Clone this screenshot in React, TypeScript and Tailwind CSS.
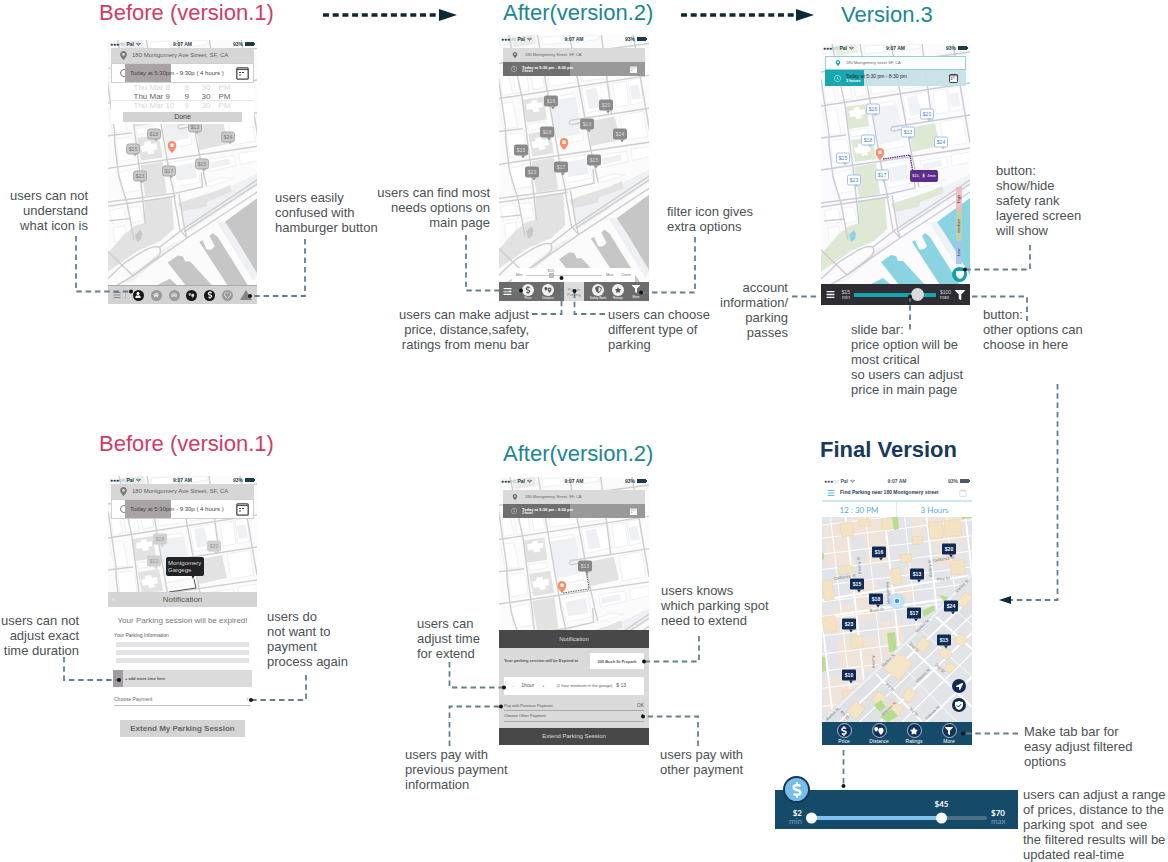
import React from "react";
import {
  FaBars, FaDollarSign, FaFilter, FaLocationArrow, FaMapMarkerAlt, FaRegCalendar,
  FaRegClock, FaRegHeart, FaShieldAlt, FaStar, FaUser, FaWifi, FaHome, FaCar,
} from "react-icons/fa";

type Palette = { land: string; block: string; park: string; water: string; road: string };

const gray: Palette = { land: "#fbfbfc", block: "#eef0f4", park: "#e2e2e2", water: "#c6c6c6", road: "#cecece" };
const color: Palette = { land: "#fbfbfd", block: "#f0f2f7", park: "#dfe8d4", water: "#8ad3e1", road: "#cbcbd3" };

const outlines = [
  "M2 3L8 2L10 9L2 10Z", "M14 3L36 1L38 8L15 11Z", "M43 2L66 1L69 7L44 10Z", "M73 2L98 0L100 4L74 8Z",
  "M2 37L10 35L15 57L5 59Z", "M14 31L27 28L31 54L18 57Z", "M31 29L41 27L46 51L35 53Z", "M46 26L74 22L78 46L51 50Z",
  "M78 21L102 17L106 42L82 45Z", "M106 18L119 15L122 38L110 40Z", "M121 15L134 13L138 35L125 37Z",
  "M82 52L108 47L112 70L86 76Z", "M112 47L125 45L128 68L115 70Z", "M127 44L139 42L142 65L130 68Z",
  "M2 67L15 65L20 90L6 91Z", "M9 97L22 95Q27 96 27 100L29 116L12 119Z", "M29 87L46 84L48 90L30 93Z",
  "M50 61L73 57L77 67L52 71Z", "M52 75L78 71L84 102L58 107Z", "M119 78L142 74L146 99L123 103Z",
  "M12 130L30 125L34 147L15 150Z", "M61 120L88 116L92 139L67 144Z", "M99 117L125 113L127 123L101 129Z",
  "M130 111L149 108L149 118L131 122Z", "M3 167L17 164L20 178L6 180Z", "M21 164L33 163L36 177L24 179Z",
  "M7 184L18 182L19 188L12 197L8 198Z", "M97 140L112 135L125 136L98 144Z",
];
const fills = [
  "M50 64L76 60L81 96L58 101Z", "M86 53L96 51L101 70L89 72Z", "M128 50L137 48L140 62L131 63Z", "M66 124L86 120L89 135L69 138Z",
  "M101 120L120 116L121 122L102 126Z", "M84 26L98 23L101 37L86 39Z", "M127 19L132 18L135 32L129 33Z",
  "M72 168L149 130L149 142L80 188Z", "M56 205L74 195L26 236L12 240Z", "M108 178L116 178L149 228L144 236Z",
];
const roads = [
  "M0 28L149 8", "M0 62L149 39", "M0 94L25 91", "M71 83L149 71", "M71 83Q68 87 73 87L82 85", "M0 126L149 104",
  "M0 35L8 90L8 101L12 133L20 159L27 196", "M11 0L24 61L33 132L38 180", "M39 0L46 40L62 132L67 154",
  "M70 0L91 112L98 143", "M101 0L111 77", "M132 0L149 99", "M0 159L68 150L94 144L93 130", "M0 163L68 153",
  "M3 177L23 175", "M66 152L72 186L79 194", "M71 151L76 182L79 194", "M0 206L26 231",
  "M149 136L74 186L52 203Q46 201 34 208L18 218L0 235", "M149 140L76 188", "M149 148L79 194L26 231L9 241",
  "M52 203Q55 210 47 215L26 231",
];

function CityMap({ palette, className }: { palette: Palette; className: string }) {
  return (
    <svg aria-hidden="true" viewBox="0 0 149 241" preserveAspectRatio="xMidYMin slice" className={className}>
      <rect width="149" height="262" fill={palette.land} />
      <g fill="#ffffff" stroke={palette.block} strokeWidth="1">
        {outlines.map((d) => <path key={d} d={d} />)}
      </g>
      <g fill={palette.block}>{fills.map((d) => <path key={d} d={d} />)}</g>
      <g fill={palette.park}>
        <path d="M24 63L45 60L48 82L28 85Z M30 96L51 93L55 115L34 118Z M33 123L55 119L59 150L38 153Z M88 84L114 79L119 102L91 108Z" />
        <path d="M37 157L64 154L66 185L53 197L30 207L0 228L0 210L18 190L28 182L38 179Z" />
        <path d="M70 160L110 147L121 142L123 149L99 158L98 163L74 168Z" />
        <path d="M14 2L35 0L37 8L16 12Z" opacity=".7" />
      </g>
      <path fill="#ffffff" d="M28 67l5-1v-2l5-1 1 3 5-1v5l-4 1 1 3-6 1-1-3-5 1z M33 104l4-1v-3l6-1 1 3 5-1 1 6-4 1 1 3-6 1-1-3-5 1z" />
      <path fill={palette.water} d="M149 154L116 178L126 193L149 231Z M91 198L94 196L98 205Q103 207 106 202L101 192L104 189L109 193L139 241L119 241L106 221Z M60 218L70 211L75 212L77 217L82 217L104 241L78 241Z M48 241L62 234L70 241Z" />
      <path fill={palette.water} d="M28 191L33 186L35 190L34 195L30 198Z" />
      <g fill="none" stroke={palette.road} strokeWidth="1.4">
        {roads.map((d) => <path key={d} d={d} />)}
      </g>
    </svg>
  );
}

type PinData = { x: number; y: number; price: string };
function Pins({ pins, look }: { pins: PinData[]; look: string }) {
  return (
    <>
      {pins.map((p) => (
        <button
          key={`${p.x}-${p.y}`}
          style={{ left: p.x, top: p.y }}
          className={`absolute flex h-[11px] w-[14px] -translate-x-1/2 -translate-y-1/2 items-center justify-center text-[5px] leading-none after:absolute after:-bottom-[3px] after:left-1/2 after:border-x-2 after:border-t-3 after:border-x-transparent after:border-t-inherit ${look}`}
        >
          {p.price}
        </button>
      ))}
    </>
  );
}

function Spot({ x, y }: { x: number; y: number }) {
  return (
    <svg aria-hidden="true" viewBox="0 0 9 12" style={{ left: x, top: y }} className="absolute h-3 w-[9px] -translate-x-1/2 -translate-y-1/2">
      <path d="M4.5 0A4.4 4.4 0 0 0 0 4.5C0 7.5 4.5 12 4.5 12S9 7.5 9 4.5A4.4 4.4 0 0 0 4.5 0Z" fill="#f98e6d" />
      <rect x="3" y="2.6" width="3" height="3.4" fill="#fff" />
    </svg>
  );
}

function StatusBar({ tone = "text-[#1d3c49]" }: { tone?: string }) {
  return (
    <div className={`relative flex h-2 items-center justify-between px-0.5 text-[5px] leading-none font-bold ${tone}`}>
      <span className="flex flex-1 items-center gap-0.5">●●●○○ Pal <FaWifi /></span>
      <span>9:07 AM</span>
      <span className="flex flex-1 items-center justify-end gap-0.5">
        93%
        <svg aria-hidden="true" viewBox="0 0 10 4" className="h-1 w-2.5"><path d="M0 0h9v1h1v2H9v1H0z" fill="currentColor" /></svg>
      </span>
    </div>
  );
}

function CalendarGlyph({ className }: { className: string }) {
  return (
    <svg aria-hidden="true" viewBox="0 0 13 13" className={className}>
      <rect x=".8" y=".8" width="11.4" height="11.4" rx="1" fill="#fff" stroke="currentColor" strokeWidth="1.3" />
      <path d="M1 2.6H12M3 5.5h2M6 5.5h2M3 8h2" stroke="currentColor" strokeWidth="1" />
    </svg>
  );
}

function HeaderOne() {
  return (
    <>
      <StatusBar />
      <div className="relative mx-[3px] flex h-[15px] items-center gap-1 bg-[#d6d6d6] pl-2 text-[6px] text-[#5d5d5d]">
        <FaMapMarkerAlt className="size-[9px] text-[#7a7a7a]" />
        <span>180 Montgomery Ave Street, SF, CA</span>
      </div>
      <div className="relative mx-[3px] flex h-5 items-center border border-[#cfcfcf] bg-white pr-1 pl-2">
        <span className="size-2 rounded-full border border-[#777]" />
        <span className="-ml-[3px] h-full w-[46px] bg-[#a9a3a6]" />
        <span className="absolute left-[18px] text-[6px] whitespace-nowrap text-[#444]">Today at 5:30pm - 9:30p ( 4 hours )</span>
        <button aria-label="Calendar" className="ml-auto"><CalendarGlyph className="size-[13px] text-[#444]" /></button>
      </div>
    </>
  );
}

function HeaderTwo() {
  return (
    <>
      <StatusBar />
      <div className="relative mx-1 mt-[5px] flex h-[14px] items-center gap-[7px] bg-[#dadada] pl-[9px] text-[4px] text-[#666]">
        <FaMapMarkerAlt className="size-[6px] text-[#666]" />
        <span>180 Montgomery Street, SF, CA</span>
      </div>
      <div className="relative mx-1 flex h-[14px] items-center bg-[#999999] pr-[7px]">
        <span className="absolute inset-y-0 left-0 w-[67px] bg-[#6f6f6f]" />
        <FaRegClock className="relative ml-2 size-[6px] text-[#b8b8b8]" />
        <span className="relative ml-[5px] flex flex-col text-[4px] leading-[5px] font-bold text-white">
          Today at 5:30 pm - 8:30 pm
          <small className="text-[3px] leading-[3px]">3 hours</small>
        </span>
        <button aria-label="Calendar" className="relative ml-auto"><CalendarGlyph className="size-[9px] text-[#8c8c8c]" /></button>
      </div>
    </>
  );
}

type Mark = { d: string; x?: number; y?: number };
function Connectors({ box, size, marks, children }: { box: string; size: string; marks: Mark[]; children?: React.ReactNode }) {
  return (
    <svg aria-hidden="true" viewBox={box} className={`pointer-events-none absolute top-0 left-0 z-10 overflow-visible ${size}`}>
      {marks.map((m) => (
        <g key={m.d}>
          <path d={m.d} fill="none" stroke="#64808a" strokeWidth="1.8" strokeDasharray="5.5 3.8" />
          {m.x !== undefined && <circle cx={m.x} cy={m.y} r="2" fill="#11181c" />}
        </g>
      ))}
      {children}
    </svg>
  );
}

function Note({ className, children }: { className: string; children: string }) {
  return <p className={`absolute text-[13px] leading-[15px] whitespace-pre text-[#4b5154] ${className}`}>{children}</p>;
}

function Heading({ className, children }: { className: string; children: string }) {
  return <h2 className={`text-[22px] leading-6 ${className}`}>{children}</h2>;
}

function DistanceGlyph({ className }: { className: string }) {
  return (
    <svg aria-hidden="true" viewBox="0 0 12 10" className={className}>
      <path d="M2.5 0A2.4 2.4 0 0 0 0 2.4C0 4 2.5 6 2.5 6S5 4 5 2.4A2.4 2.4 0 0 0 2.5 0Z M8.5 1A3.3 3.3 0 0 0 5.2 4.3C5.2 6.6 8.5 10 8.5 10S11.8 6.6 11.8 4.3A3.3 3.3 0 0 0 8.5 1Z" fill="currentColor" />
      <circle cx="8.5" cy="4.3" r="1.3" fill="#fff" />
    </svg>
  );
}

function PhoneOne() {
  const icons = [
    { name: "Account", icon: <FaUser />, tone: "bg-[#161616] text-white" },
    { name: "Garage", icon: <FaHome />, tone: "bg-[#9a9a9a] text-[#e8e8e8]" },
    { name: "Car", icon: <FaCar />, tone: "bg-[#9a9a9a] text-[#e0e0e0]" },
    { name: "Distance", icon: <DistanceGlyph className="h-[5px] w-[7px]" />, tone: "bg-[#161616] text-[#bbb]" },
    { name: "Price", icon: <FaDollarSign className="size-[8px]" />, tone: "bg-[#161616] text-white" },
    { name: "Favorites", icon: <FaRegHeart className="size-[7px]" />, tone: "bg-[#9a9a9a] text-[#e8e8e8]" },
  ];
  return (
    <div className="relative mt-[15px] ml-[108px] flex h-[264px] w-[149px] flex-col overflow-hidden">
      <CityMap palette={gray} className="absolute inset-x-0 top-0 h-[246px] w-full" />
      <Pins
        look="rounded-[3px] border border-[#a9a9a9] bg-[#c9c9c9] text-[#777]"
        pins={[
          { x: 46, y: 94, price: "$18" }, { x: 87, y: 87, price: "$13" }, { x: 120, y: 97, price: "$24" }, { x: 25, y: 109, price: "$15" },
          { x: 94, y: 124, price: "$15" }, { x: 61, y: 131, price: "$17" }, { x: 32, y: 136, price: "$23" },
        ]}
      />
      <Spot x={64} y={107} />
      <HeaderOne />
      <div className="relative mx-[3px] bg-white pb-0.5 text-[8px] leading-[9px] text-[#666]">
        {["Thu Mar 8", "Thu Mar 9", "Thu Mar 10"].map((day, i) => (
          <div key={day} className={`grid h-[9px] grid-cols-[47px_13px_13px_13px] justify-center gap-x-1 overflow-hidden ${i === 1 ? "border-b border-[#e4e4e4]" : "text-[#d9d9d9]"}`}>
            <span className="whitespace-nowrap">{day}</span><span>9</span><span>30</span><span>PM</span>
          </div>
        ))}
        <button className="mx-auto mt-0.5 block h-[10px] w-[119px] bg-[#d2d2d2] text-[7px] leading-[10px] text-[#444]">Done</button>
      </div>
      <nav className="relative mt-auto flex h-[19px] items-center justify-between border-t border-[#aaa] bg-[#d2d2d2] px-[5px]">
        <button aria-label="Menu" className="border-r border-[#bbb] pr-1"><FaBars className="size-2 text-[#85858f]" /></button>
        {icons.map((i) => (
          <button key={i.name} aria-label={i.name} className={`flex size-[11px] items-center justify-center rounded-full text-[6px] ${i.tone}`}>{i.icon}</button>
        ))}
        <svg aria-hidden="true" viewBox="0 0 12 10" className="h-2.5 w-3"><path d="M6 0L12 10H0Z" fill="#858585" /></svg>
      </nav>
    </div>
  );
}

function RoundTab({ label, icon }: { label: string; icon: React.ReactNode }) {
  return (
    <button className="flex w-5 flex-col items-center text-[3px] leading-[4px] text-white">
      <span className="flex size-3 items-center justify-center rounded-full bg-[#f1f1f1] text-[#555]">{icon}</span>
      <span className="whitespace-nowrap">{label}</span>
    </button>
  );
}

function PhoneTwo() {
  return (
    <div className="relative mt-[10px] ml-[119px] flex h-[266px] w-[150px] flex-col overflow-hidden">
      <CityMap palette={gray} className="absolute inset-x-0 top-0 h-[248px] w-full" />
      <Pins
        look="rounded-[2px] border-[#8b8b8b] bg-[#8b8b8b] text-[#ddd]"
        pins={[
          { x: 52, y: 66, price: "$16" }, { x: 107, y: 70, price: "$20" }, { x: 88, y: 89, price: "$13" }, { x: 48, y: 97, price: "$18" },
          { x: 121, y: 99, price: "$24" }, { x: 22, y: 115, price: "$15" }, { x: 95, y: 125, price: "$15" }, { x: 62, y: 132, price: "$17" }, { x: 33, y: 137, price: "$23" },
        ]}
      />
      <Spot x={65} y={109} />
      <HeaderTwo />
      <label className="relative mt-auto mr-[14px] ml-[13px] flex h-[14px] items-center gap-1 bg-white px-1 text-[4px] text-[#777]">
        Min
        <span className="relative flex flex-1 items-center">
          <span className="absolute -top-[6px] left-[21px] leading-none">$15</span>
          <input type="range" defaultValue={32} aria-label="Price" className="h-px w-full appearance-none bg-[#c9c9c9] [&::-webkit-slider-thumb]:size-[5px] [&::-webkit-slider-thumb]:appearance-none [&::-webkit-slider-thumb]:bg-[#bbbbbb]" />
        </span>
        Max <span className="ml-1">Done</span>
      </label>
      <nav className="relative flex h-[19px] items-center bg-[#6c6c6c]">
        <button aria-label="Menu" className="ml-1"><FaBars className="size-[9px] text-white" /></button>
        <span className="ml-[6px] flex"><RoundTab label="Price" icon={<FaDollarSign className="size-2" />} /><RoundTab label="Distance" icon={<DistanceGlyph className="h-1.5 w-2" />} /></span>
        <button className="ml-[6px] flex h-full w-5 flex-col items-center justify-center bg-[#dcdcdc] text-[4px] leading-[5px] text-[#888]">Private<br />Parking</button>
        <span className="ml-1 flex"><RoundTab label="Safety Rank" icon={<FaShieldAlt className="size-[7px]" />} /><RoundTab label="Ratings" icon={<FaStar className="size-[6px]" />} /></span>
        <button className="flex w-4 flex-col items-center gap-0.5 text-[3px] leading-[4px] text-white"><FaFilter className="size-2" />More</button>
      </nav>
    </div>
  );
}

function PhoneThree() {
  return (
    <div className="relative mt-[17px] ml-[51px] flex h-[261px] w-[149px] flex-col overflow-hidden">
      <CityMap palette={color} className="absolute inset-x-0 top-0 h-[241px] w-full" />
      <svg aria-hidden="true" viewBox="0 0 149 241" className="absolute top-0 left-0 h-[241px] w-[149px]">
        <path d="M62 115L89 111L92 129" fill="none" stroke="#5d2b8c" strokeWidth="1.4" strokeDasharray="1.5 .8" />
      </svg>
      <Pins
        look="rounded-[2px] border border-[#a5c4ea] bg-white text-[#4d7fcb]"
        pins={[
          { x: 52, y: 65, price: "$16" }, { x: 106, y: 70, price: "$20" }, { x: 87, y: 88, price: "$13" }, { x: 47, y: 96, price: "$18" },
          { x: 120, y: 98, price: "$24" }, { x: 22, y: 114, price: "$15" }, { x: 61, y: 131, price: "$17" }, { x: 33, y: 136, price: "$23" },
        ]}
      />
      <button className="absolute top-[126px] left-[89px] h-3 w-7 rounded-[2px] bg-[#5d2b8c] text-[4px] leading-3 whitespace-nowrap text-white">$15, 🚶︎ 4min</button>
      <Spot x={59} y={110} />
      <StatusBar />
      <div className="relative mx-1 mt-1 flex h-[14px] items-center gap-[5px] border border-[#8cd3d9] bg-white pl-[9px] text-[4px] text-[#666]">
        <FaMapMarkerAlt className="size-[6px] text-[#1aa3ab]" />
        <span>180 Montgomery street SF, CA</span>
      </div>
      <div className="relative mx-1 flex h-4 items-center bg-[#c3e0e6]/90 pr-2">
        <span className="absolute inset-y-0 left-0 w-[39px] bg-[#1aa7af]" />
        <FaRegClock className="relative ml-[9px] size-[7px] text-[#9be0e4]" />
        <span className="relative ml-[5px] flex flex-col text-[5px] leading-[5px] text-[#223]">
          Today at 5:30 pm - 8:30 pm
          <small className="text-[4px] leading-[4px] font-bold text-white">3 hours</small>
        </span>
        <button aria-label="Calendar" className="relative ml-auto"><CalendarGlyph className="size-[9px] text-[#222]" /></button>
      </div>
      <div className="absolute top-[143px] right-[8px] flex w-[6px] flex-col text-[4px] leading-[6px] text-[#334]">
        <span className="flex h-6 rotate-180 items-center justify-center bg-[#eeb9bb]/90 [writing-mode:vertical-rl]">High</span>
        <span className="flex h-[30px] rotate-180 items-center justify-center bg-[#c4cfa5]/90 [writing-mode:vertical-rl]">medium</span>
        <span className="flex h-[23px] rotate-180 items-center justify-center bg-[#a3c4e8]/90 [writing-mode:vertical-rl]">Low</span>
      </div>
      <button aria-label="Safety rank" className="absolute top-[223px] right-[3px] flex size-[15px] items-center justify-center rounded-full bg-[#15a0a8]">
        <svg aria-hidden="true" viewBox="0 0 8 8" className="size-2"><path d="M0 0H8V4Q7 7 4 8Q1 7 0 4Z" fill="#fff" /></svg>
      </button>
      <nav className="relative mt-auto flex h-[21px] items-center gap-1 bg-[#2d2d33] px-[5px] text-[5px] leading-[5px] text-[#d5d5d5]">
        <button aria-label="Account"><FaBars className="size-[9px] text-white" /></button>
        <span className="w-[11px] text-right">$15<br />min</span>
        <input type="range" defaultValue={83} aria-label="Price" className="h-1 w-20 min-w-0 flex-1 appearance-none bg-[#14a5ae] [&::-webkit-slider-thumb]:size-[13px] [&::-webkit-slider-thumb]:appearance-none [&::-webkit-slider-thumb]:rounded-full [&::-webkit-slider-thumb]:bg-[#d9d9d9]" />
        <span>$100<br />max</span>
        <button aria-label="More options"><FaFilter className="size-[10px] text-white" /></button>
      </nav>
    </div>
  );
}

function ExpiryOne() {
  return (
    <div className="relative mt-5 ml-[108px] flex h-[270px] w-[149px] flex-col">
      <div className="relative h-[116px] overflow-hidden">
        <CityMap palette={gray} className="absolute top-0 left-0 h-[241px] w-[149px]" />
        <Pins look="rounded-[2px] border-[#d0d0d0] bg-[#d0d0d0] text-[#999]" pins={[{ x: 52, y: 63, price: "$18" }, { x: 106, y: 70, price: "$20" }, { x: 46, y: 85, price: "$12" }]} />
        <svg aria-hidden="true" viewBox="0 0 149 116" className="absolute top-0 left-0 h-[116px] w-[149px]">
          <path d="M82 96H88L85 103Z" fill="#222226" /><path d="M86 103L88 112L61 116" fill="none" stroke="#555" strokeWidth="1" />
        </svg>
        <button className="absolute top-[81px] left-[58px] h-[19px] w-[38px] rounded-[2px] bg-[#222226] pl-0.5 text-left text-[6px] leading-[7px] text-[#ddd]">Montgomery Gargege</button>
        <HeaderOne />
      </div>
      <div className="relative flex h-[15px] items-center justify-center bg-[#d4d4d4] text-[8px] text-[#555]">
        <button aria-label="Back" className="absolute left-1 text-white">‹</button>Notification
      </div>
      <p className="mt-2 text-center text-[8px] leading-3 whitespace-nowrap text-[#777]">Your Parking session will be expired!</p>
      <p className="mt-1 ml-[6px] text-[5px] leading-2 text-[#555]">Your Parking Information</p>
      <div className="mt-[3px] flex flex-col gap-[3px] px-2">
        <span className="h-[5px] bg-[#e3e3e6]" /><span className="h-[5px] bg-[#e3e3e6]" /><span className="h-[5px] bg-[#e3e3e6]" />
      </div>
      <button className="mx-[5px] mt-[7px] flex h-[17px] items-center gap-0.5 bg-[#dbdbdb] text-[4px] font-bold text-[#555]">
        <span className="h-full w-[10px] bg-[#a19b9f]" />+ add more time here
      </button>
      <button className="mx-[6px] mt-2 flex h-[11px] items-center justify-between border-b border-[#c4c4c4] pr-0.5 text-[5px] text-[#666]">Choose Payment<span className="text-[8px] text-[#aaa]">›</span></button>
      <button className="mx-auto mt-[14px] h-[17px] w-[125px] bg-[#d4d4d4] text-[8px] font-bold whitespace-nowrap text-[#666]">Extend My Parking Session</button>
    </div>
  );
}

function ExpiryTwo() {
  return (
    <div className="relative mt-[11px] ml-[119px] flex w-[150px] flex-col">
      <div className="relative h-[153px] overflow-hidden">
        <CityMap palette={gray} className="absolute top-0 left-0 h-[243px] w-[150px]" />
        <svg aria-hidden="true" viewBox="0 0 150 153" className="absolute top-0 left-0 h-[153px] w-[150px]">
          <path d="M64 116L90 112L87 92" fill="none" stroke="#555" strokeWidth="1" strokeDasharray="1.5 1" />
        </svg>
        <Pins look="rounded-[2px] border-[#868686] bg-[#868686] text-[#ddd]" pins={[{ x: 86, y: 89, price: "$13" }]} />
        <Spot x={63} y={110} />
        <HeaderTwo />
      </div>
      <div className="flex h-[18px] items-center justify-center bg-[#484848] text-[6px] text-[#ddd]">Notification</div>
      <div className="flex h-20 flex-col bg-[#dadada] px-[5px] text-[4px] text-[#555]">
        <label className="mt-[5px] flex h-4 items-center justify-between font-bold whitespace-nowrap">
          Your parking session will be Expired at
          <input readOnly defaultValue="205 Bush St Propark" className="h-4 w-[54px] bg-white px-1 text-center font-bold" />
        </label>
        <div className="mt-2 flex h-[18px] items-center bg-white px-2 whitespace-nowrap">
          <button aria-label="Less time">-</button><span className="ml-2 text-[5px]">1hour</span><button aria-label="More time" className="ml-2">+</button>
          <span className="ml-3">(1 hour minimum in the garage)</span><span className="ml-1 text-[5px]">$ 13</span>
        </div>
        <button className="mt-[7px] flex h-[9px] items-center justify-between border-b border-[#aaa]"><span>Pay with Previous Payment</span><span className="text-[5px]">OK</span></button>
        <button className="flex h-[11px] items-center justify-between border-b border-[#aaa]"><span>Choose Other Payment</span><span className="text-[8px] leading-none">›</span></button>
      </div>
      <button className="h-[17px] bg-[#484848] text-[6px] text-[#ddd]">Extend Parking Session</button>
    </div>
  );
}

const northAvenues = [-12, 8, 23, 43, 62, 82, 104, 124, 143];
const northStreets = [-6, 8, 21, 37, 52, 68, 84, 101, 118, 136, 153, 170, 188, 206];
const beige = [
  [0, 8, 26, 42], [28, 0, 38, 24], [40, 14, 22, 40], [0, 90, 20, 30], [22, 70, 24, 38], [0, 125, 42, 34], [45, 112, 22, 60],
  [105, 6, 34, 36], [108, 46, 26, 18], [66, 80, 16, 12], [0, 164, 44, 36], [88, 10, 12, 22], [-20, 160, 40, 50], [76, 60, 20, 14],
];
const buildings = [
  [18, 6, 12, 14], [36, 3, 12, 7], [59, 2, 12, 11], [106, 6, 14, 16], [122, 4, 16, 16], [128, 44, 14, 14], [78, 38, 11, 8],
  [68, 52, 10, 16], [16, 50, 14, 8], [0, 64, 10, 20], [0, 100, 13, 16], [28, 120, 12, 12], [20, 174, 14, 12], [38, 168, 14, 12], [90, 20, 10, 8],
];
const southBuildings = [[66, 138, 20, 22], [96, 122, 10, 12], [118, 132, 11, 9], [134, 118, 10, 10], [82, 172, 10, 12], [138, 76, 9, 14], [52, 176, 10, 12], [124, 146, 8, 9], [66, 186, 14, 10], [28, 186, 12, 14]];

function DowntownMap() {
  const name = "font-[Liberation_Sans] text-[4px]";
  return (
    <svg viewBox="0 0 150 205" className="absolute inset-0 h-full w-full">
      <defs>
        <clipPath id="north"><path d="M0 0H150V58L108 103L0 205Z" /></clipPath>
        <clipPath id="south"><path d="M150 58V205H0L108 103Z" /></clipPath>
      </defs>
      <rect width="150" height="205" fill="#e3e4e7" />
      <g clipPath="url(#north)">
        <g transform="rotate(-7)">
          {beige.map(([x, y, w, h]) => <rect key={`${x}-${y}`} x={x} y={y} width={w} height={h} fill="#f0e4da" />)}
          {northStreets.map((y) => <path key={y} d={`M-40 ${y}H180`} stroke="#fff" strokeWidth="1" />)}
        </g>
        {northAvenues.map((x, i) => <path key={x} d={`M${x} -5L${x + 24} 210`} stroke="#fff" strokeWidth={i % 2 ? 0.9 : 1.8} />)}
        <path d="M0 83L150 58M0 100L150 78" stroke="#fff" strokeWidth="2" />
        <g fill="#f3e3c3" stroke="#e6d2ab" strokeWidth=".5">
          {buildings.map(([x, y, w, h]) => <rect key={`${x}-${y}`} x={x} y={y} width={w} height={h} rx="1" transform={`rotate(-7 ${x} ${y})`} />)}
        </g>
        <path d="M70 0L76 0L77 12L72 13Z M139 0L150 0L150 1L140 2Z M0 37L2 36L2 42L0 43Z M65 116L73 115L75 134L67 135Z M0 140L3 140L4 154L0 155Z M100 94L112 88L113 93L102 100Z M117 78L127 80L123 86Z" fill="#b7dc92" />
      </g>
      <g clipPath="url(#south)">
        <path d="M88 128L128 92L150 74V100L96 150L56 205H0Z" fill="#dfe1e5" />
        <g stroke="#fff" strokeWidth="1.1" fill="none">
          <path d="M150 98L30 212M150 136L80 205" />
          <path d="M70 139L135 205M98 112L150 160M126 86L150 108" strokeWidth=".8" />
          <path d="M150 80L10 212M150 116L58 205M150 160L104 205M52 155L100 205M84 126L150 190M112 98L150 132" strokeWidth="1.8" />
        </g>
        <g fill="#f4e5c6" stroke="#e6d2ab" strokeWidth=".5">
          {southBuildings.map(([x, y, w, h]) => <rect key={`${x}-${y}`} x={x} y={y} width={w} height={h} rx="1" transform={`rotate(38 ${x + w / 2} ${y + h / 2})`} />)}
        </g>
        <path d="M52 188L59 183L64 190L58 195Z M58 200L70 192L76 199L66 205Z" fill="#b5dd8e" />
      </g>
      <path d="M0 205L108 103L150 58" stroke="#cdd0d6" strokeWidth="4.4" fill="none" />
      <path d="M0 205L108 103L150 58" stroke="#eceef1" strokeWidth="3.6" fill="none" />
      <circle cx="75" cy="84" r="8" fill="#b9dcf3" opacity=".8" /><circle cx="75" cy="84" r="3" fill="#fff" /><circle cx="75" cy="84" r="2.2" fill="#3793dd" />
      <g fill="#777">
        <text className={name} transform="translate(12 63) rotate(-9)">California St</text>
        <text className={name} transform="translate(111 45) rotate(-9)">California St</text>
        <text className={name} transform="translate(115 64) rotate(-6)">Pine St</text>
        <text className={name} transform="translate(48 95) rotate(-7)">Bush St</text>
        <text className={name} transform="translate(39 57) rotate(-94)">Kearny St</text>
        <text className={name} transform="translate(68 87) rotate(-94)">Montgomery</text>
        <text className={name} transform="translate(110 60) rotate(-94)">Battery St</text>
        <text className={name} transform="translate(135 76) rotate(-46)">Market St</text>
        <text className={name} transform="translate(61 150) rotate(-44)">Market St</text>
        <text className={name} transform="translate(95 116) rotate(-44)">Market St</text>
        <text className={name} transform="translate(95 166) rotate(-44)">Mission St</text>
        <text className={name} transform="translate(61 199) rotate(-44)">Mission St</text>
        <text className={name} transform="translate(105 203) rotate(-44)">Folsom St</text>
        <text className={name} transform="translate(5 204) rotate(-44)">Market St</text>
        <text className={name} transform="translate(53 151) rotate(-94)">Kearny</text>
        <text className={name} transform="translate(63 167) rotate(46)">3rd St</text>
        <text className={name} transform="translate(87 127) rotate(46)">2nd St</text>
        <text className={name} transform="translate(113 148) rotate(46)">2nd St</text>
        <text className={name} transform="translate(87 192) rotate(46)">3rd St</text>
        <text className={name} transform="translate(18 195) rotate(46)">4th St</text>
      </g>
    </svg>
  );
}

function FinalPhone() {
  const tabs = [
    { label: "Price", icon: <FaDollarSign className="size-[10px]" /> },
    { label: "Distance", icon: <DistanceGlyph className="h-[8px] w-[10px]" /> },
    { label: "Ratings", icon: <FaStar className="size-2" /> },
    { label: "More", icon: <FaFilter className="size-2" /> },
  ];
  return (
    <div className="mt-[15px] ml-[52px] flex w-[150px] flex-col">
      <StatusBar tone="text-[#4a596d]" />
      <div className="flex h-[17px] items-center border-b-2 border-[#cfe6f5] px-[5px]">
        <button aria-label="Menu"><FaBars className="size-2 text-[#6fb7e3]" /></button>
        <span className="ml-[5px] text-[5px] font-bold whitespace-nowrap text-[#1c3c60]">Find Parking near 180 Montgomery street</span>
        <button aria-label="Calendar" className="ml-auto"><FaRegCalendar className="size-2 text-[#d5dbe0]" /></button>
      </div>
      <div className="grid h-[15px] grid-cols-2 divide-x divide-[#dcebf5] font-[Lato] text-[8px] text-[#55ade0]">
        <button>12 : 30 PM</button><button>3 Hours</button>
      </div>
      <div className="relative h-[205px] overflow-hidden">
        <DowntownMap />
        <Pins
          look="rounded-[1px] border-[#0f2b55] bg-[#0f2b55] font-bold text-white"
          pins={[
            { x: 57, y: 35, price: "$16" }, { x: 127, y: 32, price: "$20" }, { x: 95, y: 57, price: "$13" }, { x: 35, y: 67, price: "$15" }, { x: 54, y: 82, price: "$18" },
            { x: 92, y: 96, price: "$17" }, { x: 129, y: 89, price: "$24" }, { x: 27, y: 107, price: "$23" }, { x: 122, y: 123, price: "$15" }, { x: 27, y: 158, price: "$10" },
          ]}
        />
        <div className="absolute right-[6px] bottom-[10px] flex flex-col gap-[5px]">
          <button aria-label="My location" className="flex size-[14px] items-center justify-center rounded-full bg-[#0f2b55] text-white"><FaLocationArrow className="size-[7px]" /></button>
          <button aria-label="Safety" className="flex size-[14px] items-center justify-center rounded-full bg-[#0f2b55] text-white">
            <svg aria-hidden="true" viewBox="0 0 8 9" className="h-[9px] w-2"><path d="M4 0Q6 1 8 1V5Q7 8 4 9Q1 8 0 5V1Q2 1 4 0Z" fill="#fff" /><path d="M2 4.5L3.5 6L6 3.2" stroke="#0f2b55" strokeWidth="1" fill="none" /></svg>
          </button>
        </div>
      </div>
      <nav className="flex h-[23px] items-center gap-[13px] bg-[#154a69] pl-[11px] text-white">
        {tabs.map((t) => (
          <button key={t.label} className="flex w-[22px] flex-col items-center text-[5px] leading-[6px]">
            <span className="flex size-[15px] items-center justify-center rounded-full border border-[#a9bfd0] bg-[#123059]">{t.icon}</span>
            {t.label}
          </button>
        ))}
      </nav>
    </div>
  );
}

const thumb =
  "pointer-events-none absolute inset-x-0 top-1/2 h-[11px] w-full -translate-y-1/2 appearance-none bg-transparent [&::-webkit-slider-thumb]:pointer-events-auto [&::-webkit-slider-thumb]:size-[11px] [&::-webkit-slider-thumb]:appearance-none [&::-webkit-slider-thumb]:rounded-full [&::-webkit-slider-thumb]:bg-white";

function PriceRange() {
  return (
    <div className="relative mt-[45px] ml-[5px] flex h-[39px] w-[243px] items-end bg-[#154a69] px-2.5 pb-1 font-[Lato] font-bold text-white">
      <span className="absolute -top-[14px] left-2 flex size-[27px] items-center justify-center rounded-full border-2 border-[#15375e] bg-[#79bdea]"><FaDollarSign className="size-4" /></span>
      <span className="w-[17px] text-right text-[8px] leading-[8px]">$2<br /><span className="font-normal text-[#7e9db0]">min</span></span>
      <div className="relative mx-[4px] mb-0.5 h-[11px] flex-1">
        <span className="absolute inset-x-0 top-1 h-1 rounded-full bg-[#4f6f86]" />
        <span className="absolute top-1 left-1 h-1 w-[72%] bg-[#80c3ee]" />
        <span className="absolute -top-[14px] left-[71%] text-[8px]">$45</span>
        <input type="range" aria-label="Minimum price" min={2} max={70} defaultValue={2} className={thumb} />
        <input type="range" aria-label="Maximum price" min={2} max={70} defaultValue={54} className={thumb} />
      </div>
      <span className="w-[17px] text-[8px] leading-[8px]">$70<br /><span className="font-normal text-[#7e9db0]">max</span></span>
    </div>
  );
}

export default function App() {
  return (
    <main className="grid min-w-[1168px] grid-cols-[380fr_390fr_398fr] grid-rows-[430px_minmax(432px,auto)] overflow-hidden bg-white font-[Liberation_Sans,sans-serif]">
      <section className="relative pt-px">
        <Heading className="ml-[99px] text-[#d13b66]">Before (version.1)</Heading>
        <PhoneOne />
        <Note className="left-0 top-[188px] w-[88px] text-right">{"users can not\nunderstand\nwhat icon is"}</Note>
        <Note className="left-[275px] top-[190px]">{"users easily\nconfused with\nhamburger button"}</Note>
        <Connectors box="0 0 380 430" size="h-[430px] w-[380px]" marks={[{ d: "M76 236V291.5H131", x: 131, y: 291.5 }, { d: "M305 239V296H251", x: 250, y: 296 }]}>
          <path d="M323 15H440" stroke="#0b2a33" strokeWidth="3.4" strokeDasharray="6 3.7" /><path d="M439 9L457 15L439 21Z" fill="#0b2a33" />
        </Connectors>
      </section>

      <section className="relative pt-px">
        <Heading className="ml-[123px] text-[#1b8792]">After(version.2)</Heading>
        <PhoneTwo />
        <Note className="-left-[10px] top-[185px] w-[120px] text-right">{"users can find most\nneeds options on\nmain page"}</Note>
        <Note className="left-[287px] top-[204px]">{"filter icon gives\nextra options"}</Note>
        <Note className="left-0 top-[307px] w-[149px] text-right">{"users can make adjust\nprice, distance,safety,\nratings from menu bar"}</Note>
        <Note className="left-[228px] top-[307px]">{"users can choose\ndifferent type of\nparking"}</Note>
        <Connectors box="380 0 390 430" size="h-[430px] w-[390px]" marks={[
          { d: "M466 235V290.5H518", x: 521, y: 290.5 }, { d: "M695 237V292.5H641", x: 641, y: 292.5 },
          { d: "M532 314H561.5V278", x: 561.5, y: 278 }, { d: "M605 314H574.5V291", x: 574.5, y: 291 },
        ]}>
          <path d="M681 15H796" stroke="#0b2a33" strokeWidth="3.4" strokeDasharray="6 3.7" /><path d="M796 9L814 15L796 21Z" fill="#0b2a33" />
        </Connectors>
      </section>

      <section className="relative pt-[3px]">
        <Heading className="ml-[71px] text-[#1b8792]">Version.3</Heading>
        <PhoneThree />
        <Note className="left-[226px] top-[163px]">{"button:\nshow/hide\nsafety rank\nlayered screen\nwill show"}</Note>
        <Note className="-left-[62px] top-[280px] w-20 text-right">{"account\ninformation/\nparking\npasses"}</Note>
        <Note className="left-[81px] top-[322px]">{"slide bar:\nprice option will be\nmost critical\nso users can adjust\nprice in main page"}</Note>
        <Note className="left-[213px] top-[307px]">{"button:\nother options can\nchoose in here"}</Note>
        <Connectors box="770 0 398 430" size="h-[430px] w-[398px]" marks={[
          { d: "M1030 245V269.5H966", x: 965, y: 269.5 }, { d: "M792 296.5H820" }, { d: "M910 296V330", x: 910, y: 296.5 },
          { d: "M972 296.5H1027V321" }, { d: "M1057.5 384V600H1008" },
        ]}>
          <path d="M999 600L1011 596V604Z" fill="#0b2a33" />
        </Connectors>
      </section>

      <section className="relative pt-0.5">
        <Heading className="ml-[99px] text-[#d13b66]">Before (version.1)</Heading>
        <ExpiryOne />
        <Note className="left-0 top-[183px] w-[79px] text-right">{"users can not\nadjust exact\ntime duration"}</Note>
        <Note className="left-[267px] top-[179px]">{"users do\nnot want to\npayment\nprocess again"}</Note>
        <Connectors box="0 430 380 432" size="h-[432px] w-[380px]" marks={[{ d: "M64 657V680H119", x: 119, y: 680 }, { d: "M306 675V700H251", x: 251, y: 700 }]} />
      </section>

      <section className="relative pt-3">
        <Heading className="ml-[123px] text-[#1b8792]">After(version.2)</Heading>
        <ExpiryTwo />
        <Note className="left-[37px] top-[186px]">{"users can\nadjust time\nfor extend"}</Note>
        <Note className="left-[281px] top-[153px]">{"users knows\nwhich parking spot\nneed to extend"}</Note>
        <Note className="left-[25px] top-[317px]">{"users pay with\nprevious payment\ninformation"}</Note>
        <Note className="left-[280px] top-[317px]">{"users pay with\nother payment"}</Note>
        <Connectors box="380 430 390 432" size="h-[432px] w-[390px]" marks={[
          { d: "M449.5 662V687.5H504", x: 504, y: 687.5 }, { d: "M699 636V661.5H644", x: 644, y: 661.5 },
          { d: "M449.5 746V706.5H501", x: 501, y: 706.5 }, { d: "M698 746V716.5H643", x: 643, y: 716.5 },
        ]} />
      </section>

      <section className="relative pt-2">
        <Heading className="ml-[50px] font-bold text-[#163a5c]">Final Version</Heading>
        <FinalPhone />
        <PriceRange />
        <Note className="left-[254px] top-[294px]">{"Make tab bar for\neasy adjust filtered\noptions"}</Note>
        <Note className="left-[253px] top-[357px]">{"users can adjust a range\nof prices, distance to the\nparking spot  and see\nthe filtered results will be\nupdated real-time"}</Note>
        <Connectors box="770 430 398 432" size="h-[432px] w-[398px]" marks={[{ d: "M1018 733.5H966", x: 963, y: 733.5 }, { d: "M843.5 750V784", x: 843.5, y: 786 }]} />
      </section>
    </main>
  );
}
